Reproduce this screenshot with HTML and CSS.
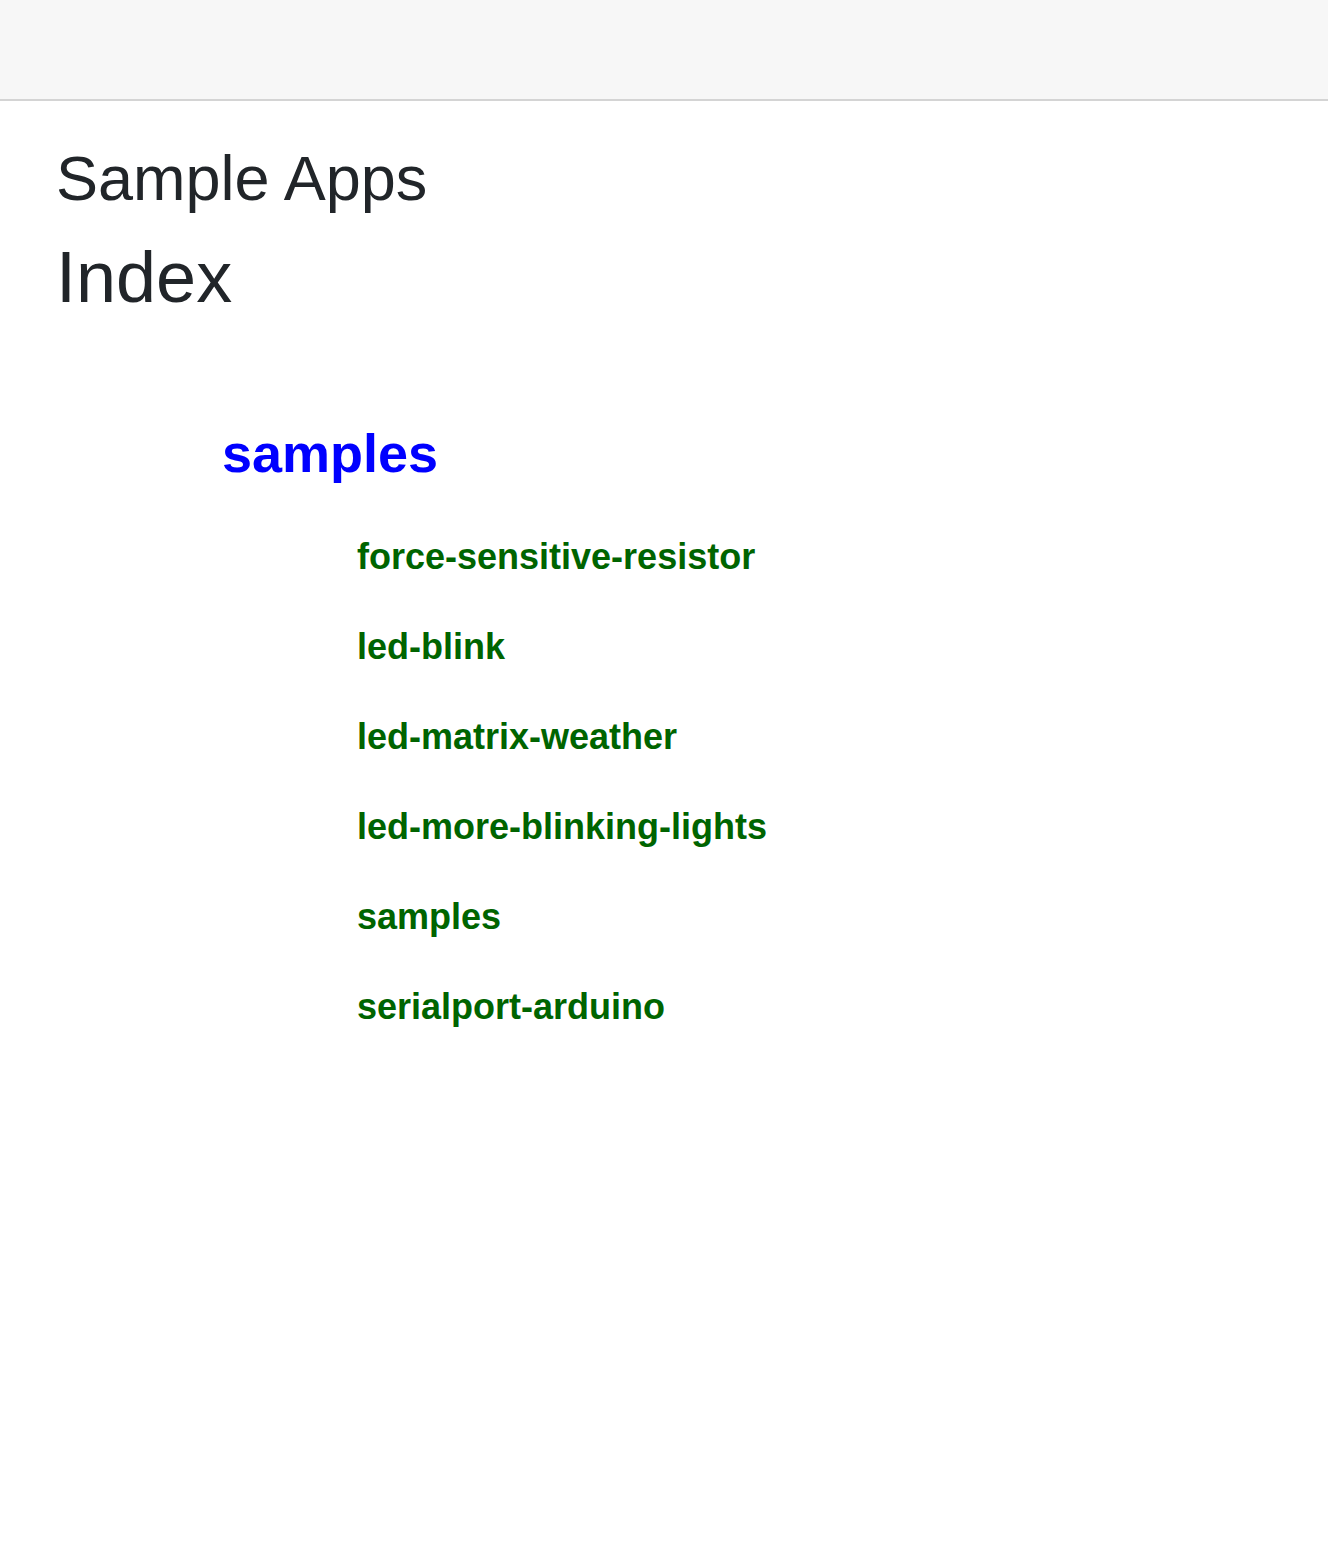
FILE: index.html
```html
<!DOCTYPE html>
<html lang="en">

<head>
    <meta charset="UTF-8">
    <title>Sample Apps</title>
    <link rel="stylesheet" href="styles.css">
</head>

<body>
<div class="topbar"></div>
<div class="main">
    <h1 class="title">Sample Apps</h1>
    <h2 class="subtitle">Index</h2>
    <ul class="tree">
        <li class="folder">
            <a href="#">samples</a>
            <ul class="apps">
                <li><a href="#">force-sensitive-resistor</a></li>
                <li><a href="#">led-blink</a></li>
                <li><a href="#">led-matrix-weather</a></li>
                <li><a href="#">led-more-blinking-lights</a></li>
                <li><a href="#">samples</a></li>
                <li><a href="#">serialport-arduino</a></li>
            </ul>
        </li>
    </ul>
</div>
</body>

</html>
```

FILE: styles.css
```css
html,
body {
    margin: 0;
    font-family: "Liberation Sans", Arial, sans-serif;
    color: #212529;
    background: #fff;
}

.topbar {
    height: 99px;
    background: #f7f7f7;
    border-bottom: 2px solid #d4d4d4;
}

.main {
    padding: 0 56px;
}

.title {
    margin: 39px 0 0;
    font-size: 63px;
    font-weight: normal;
    line-height: 77px;
}

.subtitle {
    margin: 17px 0 0;
    font-size: 72px;
    font-weight: normal;
    line-height: 86px;
}

.tree {
    list-style: none;
    margin: 103px 0 0;
    padding: 0 0 0 166px;
}

.folder > a {
    display: block;
    color: #0000ff;
    font-size: 54px;
    font-weight: bold;
    line-height: 60px;
    text-decoration: none;
}

.apps {
    list-style: none;
    margin: 29px 0 0;
    padding: 0 0 0 135px;
}

.apps li {
    font-size: 36px;
    font-weight: bold;
    line-height: 90px;
}

.apps a {
    color: #006400;
    text-decoration: none;
}
```
